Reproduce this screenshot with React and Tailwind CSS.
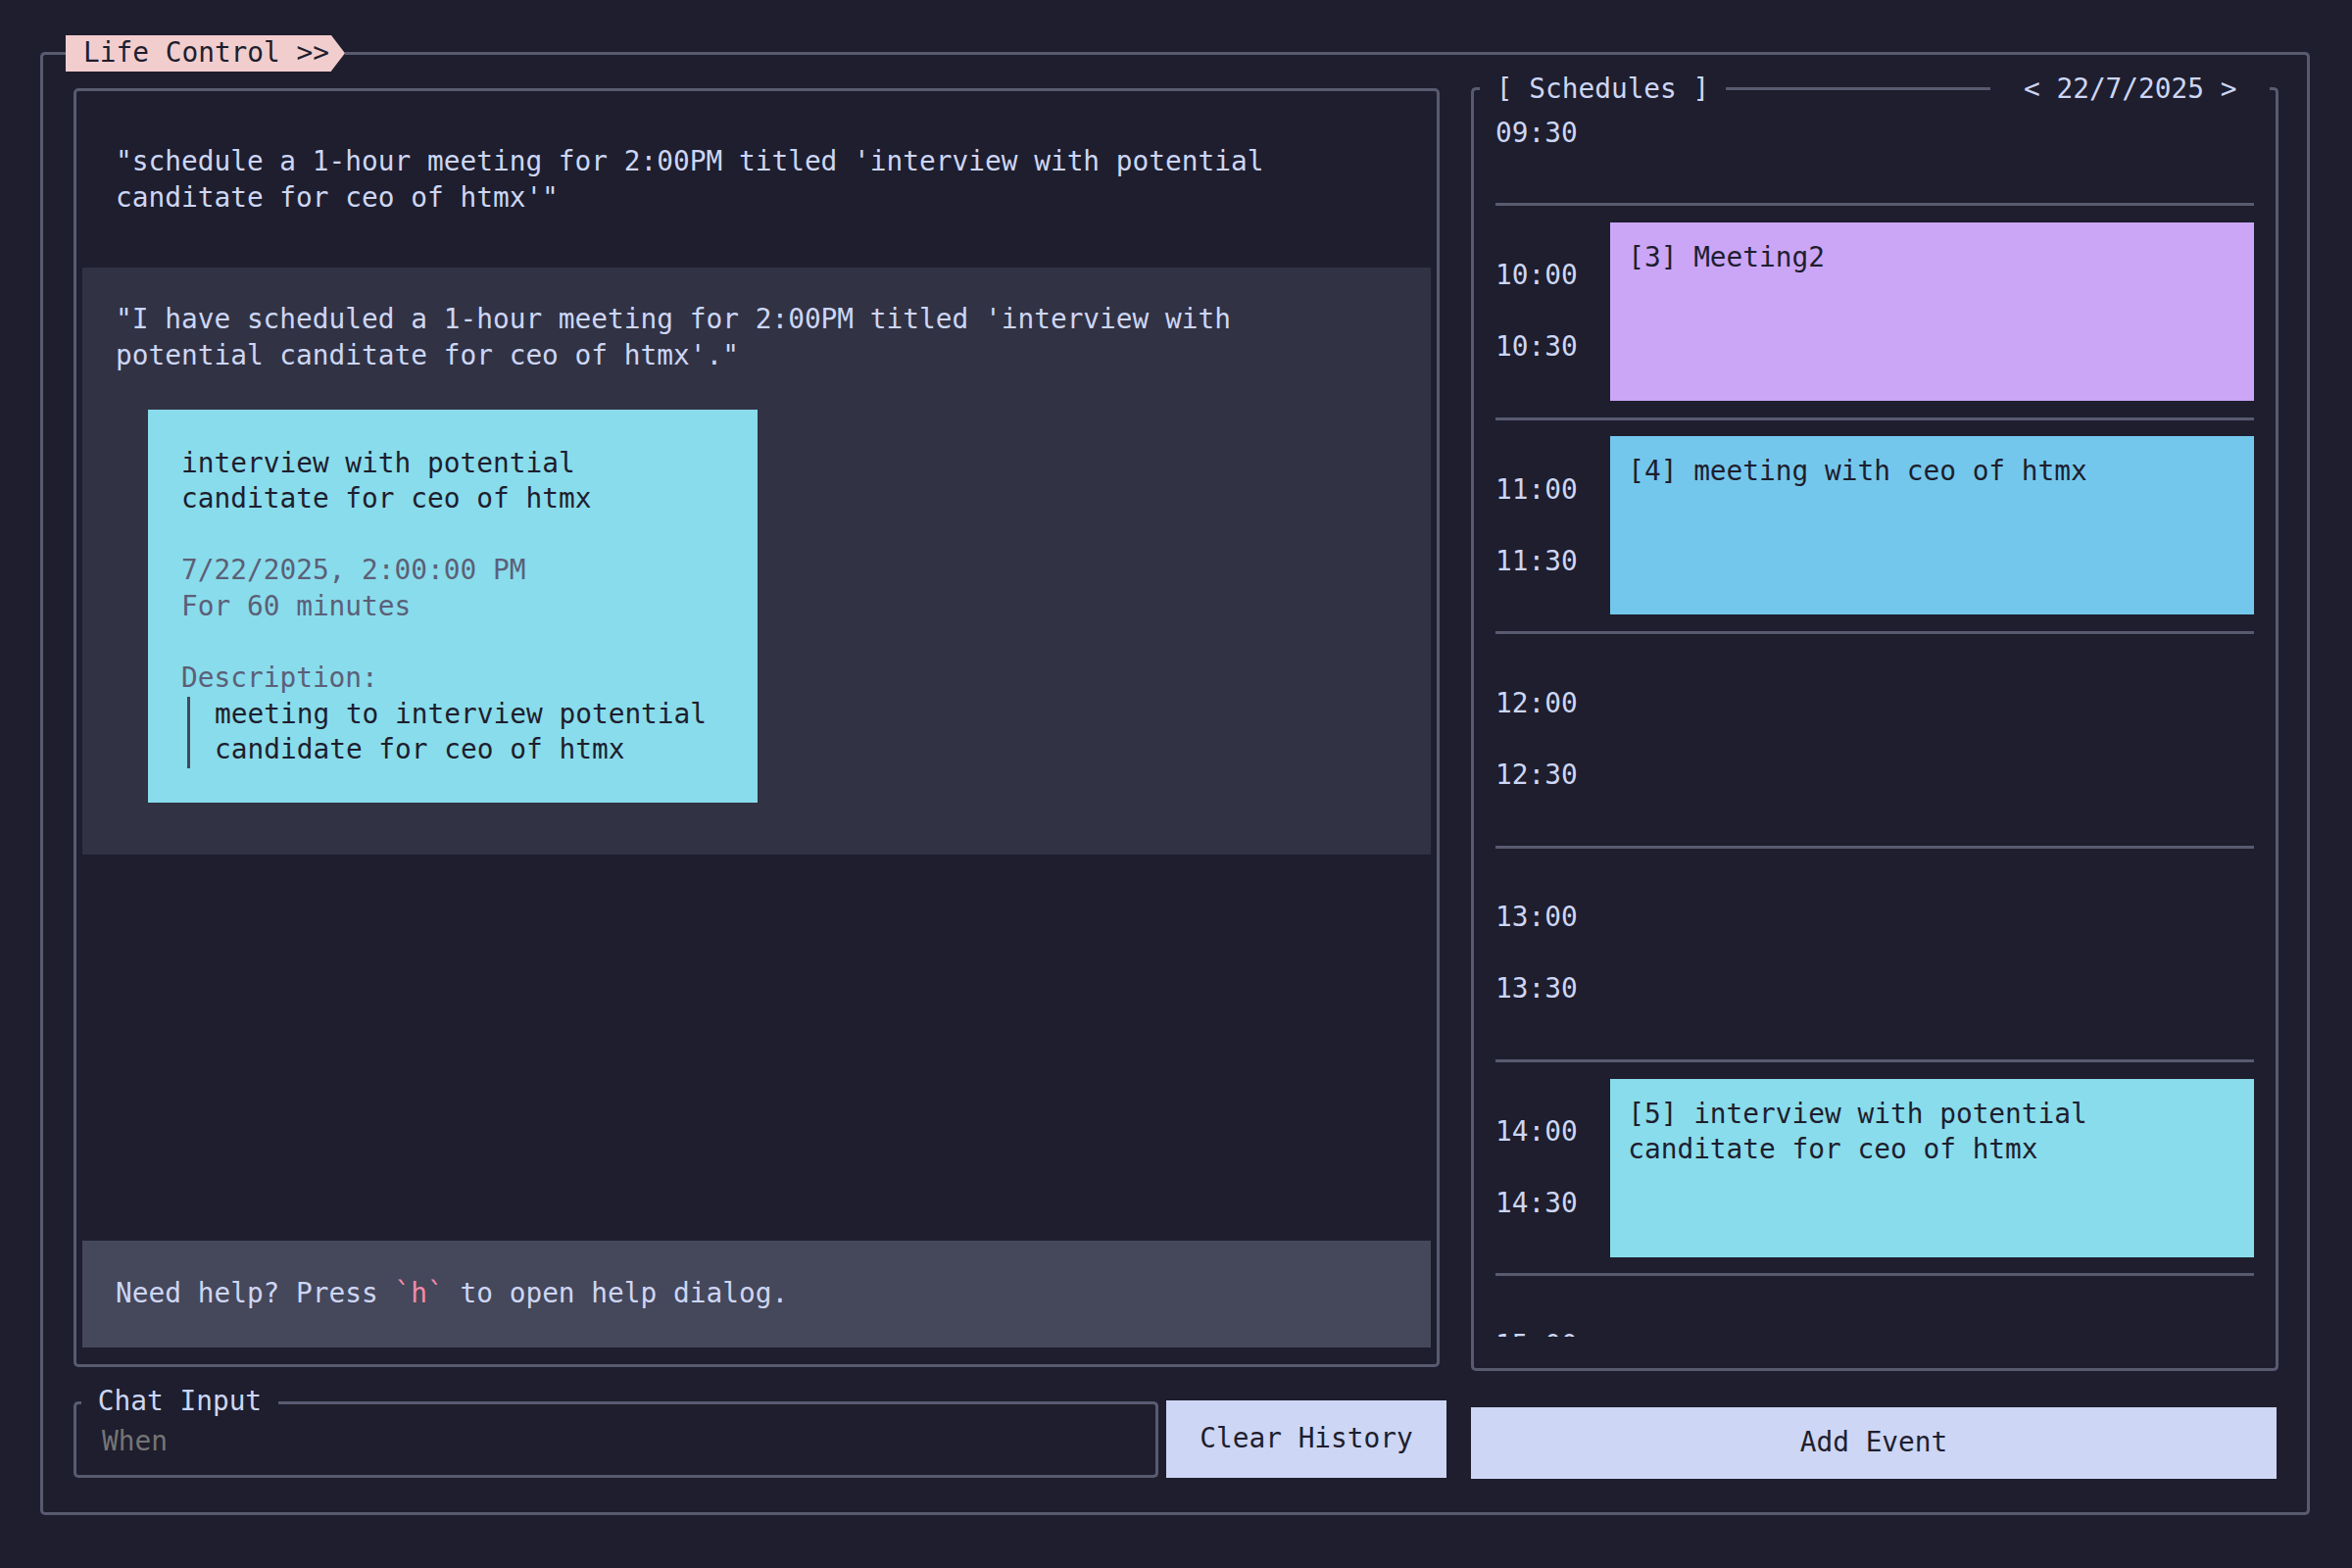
function TimeBlock({ a, b, ev }) {
  return (
    <div>
      <div className="h-[3px] bg-[#585b70]" />
      <div className="h-[182px] my-[16.7px] flex items-center gap-[33.5px]">
        <div className="w-[83.7px] shrink-0">
          <div className="h-[36.6px]">{a}</div>
          <div className="h-[36.6px]" />
          <div className="h-[36.6px]">{b}</div>
        </div>
        {ev ? (
          <div className={"flex-1 h-[182px] p-[18px] text-[#1e1e2e] " + ev.bg}>
            {ev.lines.map((l, i) => (
              <div key={i} className="whitespace-pre">{l}</div>
            ))}
          </div>
        ) : (
          <div className="flex-1 h-[182px]" />
        )}
      </div>
    </div>
  );
}

export default function App() {
  const blocks = [
    { a: "", b: "09:30" },
    { a: "10:00", b: "10:30", ev: { bg: "bg-[#cba6f7]", lines: ["[3] Meeting2"] } },
    { a: "11:00", b: "11:30", ev: { bg: "bg-[#74c7ec]", lines: ["[4] meeting with ceo of htmx"] } },
    { a: "12:00", b: "12:30" },
    { a: "13:00", b: "13:30" },
    { a: "14:00", b: "14:30", ev: { bg: "bg-[#89dceb]", lines: ["[5] interview with potential", "canditate for ceo of htmx"] } },
    { a: "15:00", b: "" },
  ];

  return (
    <div className="w-[2400px] h-[1600px] bg-[#1e1e2e] pl-[41px] pt-[36px] font-['DejaVu_Sans_Mono',monospace] text-[27.8px] leading-[36.6px] text-[#cdd6f4] overflow-hidden">
      <div className="w-[2316px] flex flex-col">
        {/* outer top border with badge */}
        <div className="flex h-[36.6px]">
          <div className="w-[26px] h-[19.6px] self-end border-t-[3px] border-l-[3px] border-[#585b70] rounded-tl-[5px]" />
          <div className="flex">
            <span className="bg-[#f2cdcd] text-[#1e1e2e] pl-[18px] pr-[2px] whitespace-pre">Life Control &gt;&gt;</span>
            <svg width="14" height="36.6" viewBox="0 0 14 36.6" className="block">
              <polygon points="0,0 14,18.3 0,36.6" fill="#f2cdcd" />
            </svg>
          </div>
          <div className="flex-1 h-[3px] mt-[17px] bg-[#585b70]" />
          <div className="w-[8px] h-[19.6px] self-end border-t-[3px] border-r-[3px] border-[#585b70] rounded-tr-[5px]" />
        </div>

        <div className="h-[1473.4px] border-x-[3px] border-b-[3px] border-[#585b70] rounded-b-[5px] flex pl-[31px] pr-[29px] gap-[25px]">
          {/* left column */}
          <div className="w-[1401px] pt-[17.4px] flex flex-col">
            <div className="w-[1394px] h-[1305px] border-[3px] border-[#585b70] rounded-[5px] flex flex-col justify-between px-[6px] pt-[6px] pb-[17px]">
              <div className="flex flex-col">
                <div className="px-[34px] pt-[48px] pb-[53px]">
                  <div className="whitespace-pre">"schedule a 1-hour meeting for 2:00PM titled 'interview with potential</div>
                  <div className="whitespace-pre">canditate for ceo of htmx'"</div>
                </div>
                <div className="bg-[#313244] px-[34px] pt-[35px] pb-[53px]">
                  <div className="whitespace-pre">"I have scheduled a 1-hour meeting for 2:00PM titled 'interview with</div>
                  <div className="whitespace-pre">potential canditate for ceo of htmx'."</div>
                  <div className="mt-[36.6px] ml-[33px] w-[622px] bg-[#89dceb] text-[#1e1e2e] pl-[34px] pt-[36.6px] pb-[35px]">
                    <div className="whitespace-pre">interview with potential</div>
                    <div className="whitespace-pre">canditate for ceo of htmx</div>
                    <div className="h-[36.6px]" />
                    <div className="text-[#5c5f77] whitespace-pre">7/22/2025, 2:00:00 PM</div>
                    <div className="text-[#5c5f77] whitespace-pre">For 60 minutes</div>
                    <div className="h-[36.6px]" />
                    <div className="text-[#5c5f77] whitespace-pre">Description:</div>
                    <div className="ml-[6px] border-l-[3px] border-[#45475a] pl-[25px]">
                      <div className="whitespace-pre">meeting to interview potential</div>
                      <div className="whitespace-pre">candidate for ceo of htmx</div>
                    </div>
                  </div>
                </div>
              </div>
              <div className="bg-[#45475a] px-[34px] py-[36px] whitespace-pre">
                Need help? Press <span className="text-[#f38ba8]">`h`</span> to open help dialog.
              </div>
            </div>

            <div className="mt-[17px] flex items-end gap-[8px]">
              <div className="w-[1107px] flex flex-col">
                <div className="flex h-[36.6px]">
                  <div className="w-[8px] h-[18.6px] self-end border-t-[3px] border-l-[3px] border-[#585b70] rounded-tl-[5px]" />
                  <span className="px-[16.75px] whitespace-pre">Chat Input</span>
                  <div className="flex-1 h-[3px] mt-[18px] bg-[#585b70]" />
                  <div className="w-[8px] h-[18.6px] self-end border-t-[3px] border-r-[3px] border-[#585b70] rounded-tr-[5px]" />
                </div>
                <div className="border-x-[3px] border-b-[3px] border-[#585b70] rounded-b-[5px] pt-[4px] pb-[16px] pl-[26px] pr-[10px]">
                  <input
                    placeholder="When"
                    className="block w-full h-[36.6px] bg-transparent outline-none text-[#cdd6f4] placeholder:text-[#757575]"
                  />
                </div>
              </div>
              <button className="h-[79px] w-[286px] bg-[#cdd6f4] text-[#1e1e2e] whitespace-pre">Clear History</button>
            </div>
          </div>

          {/* right column */}
          <div className="w-[824px] flex flex-col">
            <div className="flex h-[36.6px]">
              <div className="w-[9px] h-[20.2px] self-end border-t-[3px] border-l-[3px] border-[#585b70] rounded-tl-[5px]" />
              <span className="px-[16.75px] whitespace-pre">[ Schedules ]</span>
              <div className="flex-1 h-[3px] mt-[16.4px] bg-[#585b70]" />
              <span className="px-[33.5px] whitespace-pre">&lt; 22/7/2025 &gt;</span>
              <div className="w-[9px] h-[20.2px] self-end border-t-[3px] border-r-[3px] border-[#585b70] rounded-tr-[5px]" />
            </div>
            <div className="h-[1289.8px] border-x-[3px] border-b-[3px] border-[#585b70] rounded-b-[5px] px-[22px] pb-[32px] flex flex-col">
              <div className="flex-1 overflow-hidden">
                <div className="mt-[-120.2px]">
                  {blocks.map((b, i) => (
                    <TimeBlock key={i} {...b} />
                  ))}
                </div>
              </div>
            </div>
            <button className="mt-[37px] h-[73px] w-[822px] bg-[#cdd6f4] text-[#1e1e2e] whitespace-pre">Add Event</button>
          </div>
        </div>
      </div>
    </div>
  );
}
